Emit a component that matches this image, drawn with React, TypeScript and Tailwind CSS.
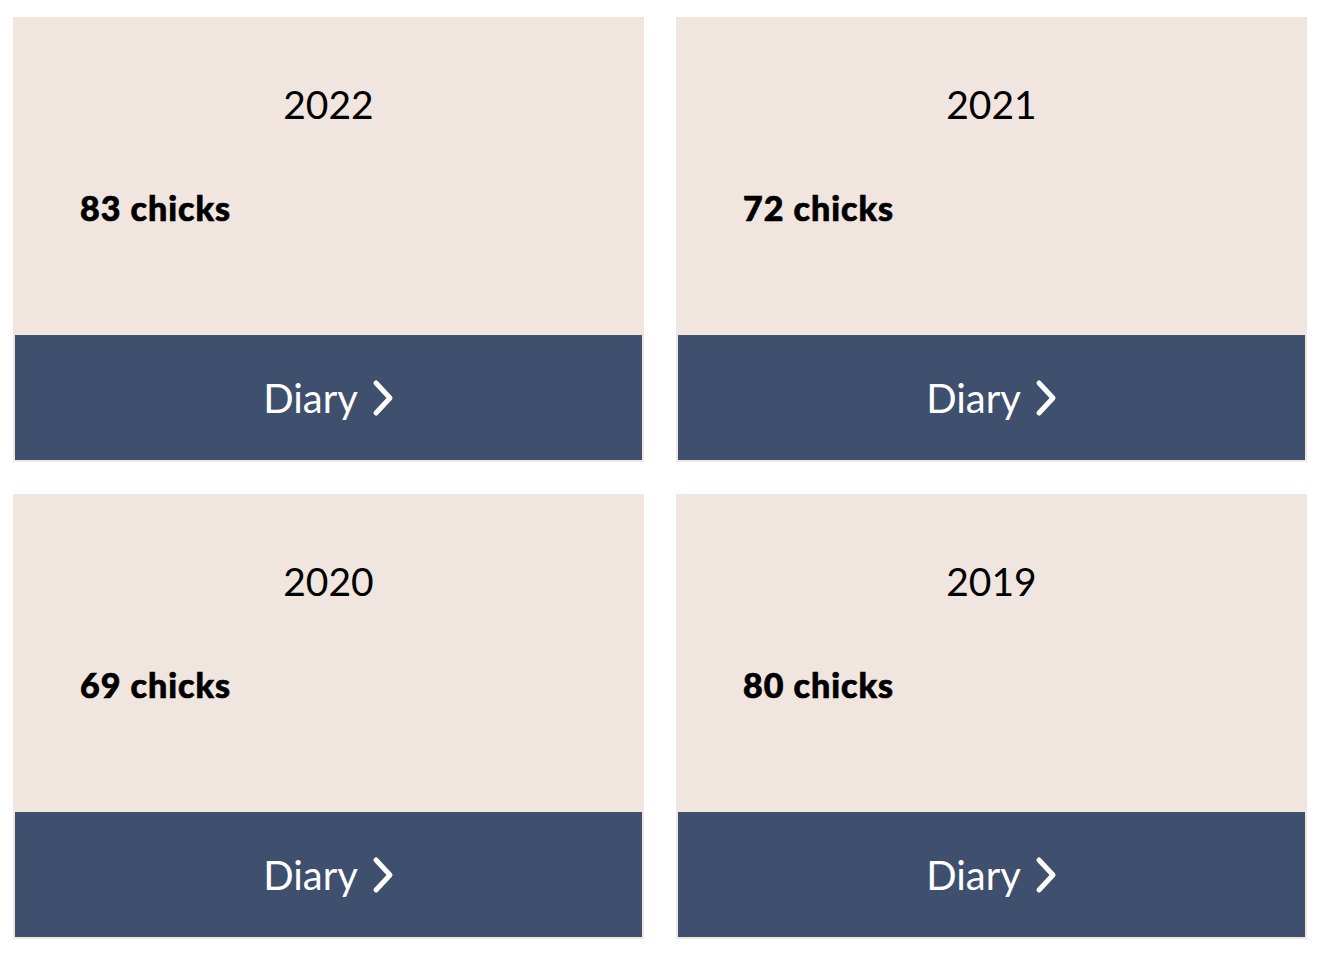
const YEARS = [
  { year: "2022", chicks: 83 },
  { year: "2021", chicks: 72 },
  { year: "2020", chicks: 69 },
  { year: "2019", chicks: 80 },
];

function Chevron() {
  return (
    <svg width="22" height="38" viewBox="0 0 22 38" fill="none" aria-hidden>
      <polyline
        points="4,4 18,19 4,34"
        stroke="currentColor"
        strokeWidth="5"
        strokeLinecap="round"
        strokeLinejoin="round"
      />
    </svg>
  );
}

function YearCard(props: { year: string; chicks: number }) {
  return (
    <div className="flex h-[445px] flex-col bg-[#f1e6df] px-[2px] pb-[2px]">
      <div className="flex flex-1 flex-col">
        <h2 className="mt-[66px] text-center text-[39px] leading-[42px] font-normal text-black">
          {props.year}
        </h2>
        <p className="mt-[64px] pl-[65px] text-[34px] leading-[38px] font-black tracking-[1px] text-black [-webkit-text-stroke:0.7px_black]">
          {props.chicks} chicks
        </p>
      </div>
      <button
        type="button"
        className="flex h-[125px] items-center justify-center gap-[14px] bg-[#3e506e] text-[40px] text-white"
      >
        <span>Diary</span>
        <Chevron />
      </button>
    </div>
  );
}

export default function App() {
  return (
    <div className="min-h-screen bg-white px-[13px] pt-[17px] font-['Lato',sans-serif]">
      <div className="grid grid-cols-[631px_631px] gap-8">
        {YEARS.map((y) => (
          <YearCard key={y.year} year={y.year} chicks={y.chicks} />
        ))}
      </div>
    </div>
  );
}
